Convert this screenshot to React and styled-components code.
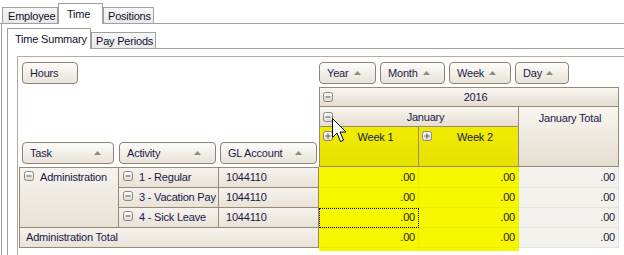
import React from 'react';
import styled, { createGlobalStyle } from 'styled-components';

const GlobalStyle = createGlobalStyle`
  html, body {
    margin: 0;
    padding: 0;
    background: #fff;
  }
  body {
    font-family: "Liberation Sans", Arial, sans-serif;
    font-size: 11px;
    letter-spacing: -0.2px;
    color: #000;
    overflow: hidden;
  }
`;

const LINE = '#9b8777';

const Page = styled.div`
  position: relative;
  width: 624px;
  height: 255px;
  overflow: hidden;
`;

const TabStrip = styled.div`
  display: flex;
  align-items: flex-end;
  height: ${p => p.$h}px;
  padding-left: ${p => p.$pad}px;
  border-bottom: 1px solid #a0a0a0;
`;

const Tab = styled.div`
  box-sizing: border-box;
  width: ${p => p.$w}px;
  height: ${p => p.$h}px;
  margin-bottom: ${p => (p.$active ? -1 : 0)}px;
  border: 1px solid #a0a0a0;
  border-bottom: none;
  background: ${p => (p.$active ? '#fff' : 'linear-gradient(#f7f7f7, #e9e9e9)')};
  display: flex;
  align-items: ${p => (p.$active ? 'flex-start' : 'center')};
  padding-top: ${p => (p.$active ? 4 : 0)}px;
  padding-left: ${p => p.$pl}px;
  color: #101030;
  white-space: nowrap;
`;

const TabBody = styled.div`
  margin-left: 1px;
  border-left: 1px solid #a0a0a0;
  padding: 4px 0 0 5px;
`;

const SubBody = styled.div`
  border-left: 1px solid #a0a0a0;
  padding: 7px 0 0 9px;
`;

const Pivot = styled.div`
  height: 200px;
  border-top: 1px solid #b9aa9c;
  border-left: 1px solid #b9aa9c;
  padding-left: 1px;
`;

const Grid = styled.div`
  display: grid;
  grid-template-columns: repeat(6, 100px);
  grid-template-rows: 30px 20px 20px 40px 21px 20px 20px 20px 3px;
`;

const FieldArea = styled.div`
  grid-column: ${p => p.$col};
  grid-row: ${p => p.$row};
  display: flex;
  align-items: ${p => (p.$bottom ? 'flex-end' : 'flex-start')};
  gap: ${p => p.$gap}px;
  padding: ${p => (p.$bottom ? '0 0 3px 3px' : `5px 0 0 ${p.$pl}px`)};
`;

const FieldButton = styled.div`
  box-sizing: border-box;
  width: ${p => p.$w}px;
  margin-right: ${p => p.$mr || 0}px;
  height: 22px;
  border: 1px solid #8f8276;
  border-radius: 4px;
  background: linear-gradient(#fdfcfa, #e9e3d8);
  display: flex;
  align-items: center;
  justify-content: space-between;
  padding: 0 ${p => p.$pr}px 0 7px;
  color: #1a1a48;
  white-space: nowrap;
`;

const HeadCell = styled.div`
  grid-column: ${p => p.$col};
  grid-row: ${p => p.$row};
  box-sizing: border-box;
  border-right: 1px solid ${LINE};
  border-bottom: 1px solid ${LINE};
  border-top: ${p => (p.$top ? `1px solid ${LINE}` : 'none')};
  border-left: ${p => (p.$left ? `1px solid ${LINE}` : 'none')};
  background: ${p =>
    p.$hl ? 'linear-gradient(#f0ec00, #e6e200)' : 'linear-gradient(#f8f6f1, #e5ded1)'};
  display: flex;
  align-items: ${p => (p.$tall ? 'flex-start' : 'center')};
  padding: ${p => (p.$tall ? '4px' : '0')} 0 0 3px;
  color: #181848;
  white-space: nowrap;
`;

const HeadText = styled.span`
  flex: 1;
  text-align: center;
  line-height: 12px;
  padding-top: ${p => (p.$tall ? 1 : 0)}px;
`;

const RowCell = styled.div`
  grid-column: ${p => p.$col};
  grid-row: ${p => p.$row};
  box-sizing: border-box;
  border-right: 1px solid ${LINE};
  border-bottom: 1px solid ${LINE};
  border-top: ${p => (p.$top ? `1px solid ${LINE}` : 'none')};
  border-left: ${p => (p.$left ? `1px solid ${LINE}` : 'none')};
  background: linear-gradient(#f6f3ee, #e8e2d7);
  display: flex;
  align-items: flex-start;
  gap: 6px;
  padding: 3px 0 0 ${p => p.$pl}px;
  line-height: 12px;
  color: #181848;
  white-space: nowrap;
  overflow: hidden;
`;

const DataCell = styled.div`
  grid-column: ${p => p.$col};
  grid-row: ${p => p.$row};
  box-sizing: border-box;
  background: ${p => (p.$total ? '#f4f2ee' : '#f7f700')};
  border-bottom: 1px solid ${p => (p.$total ? '#e6e2da' : '#ecec00')};
  border-right: 1px solid ${p => (p.$total ? '#e2ded6' : '#eeee00')};
  outline: ${p => (p.$focus ? '1px dotted #000' : 'none')};
  outline-offset: -1px;
  text-align: right;
  padding-right: 3px;
  line-height: ${p => (p.$first ? 21 : 19)}px;
  color: #201830;
`;

const Strip = styled.div`
  grid-column: ${p => p.$col};
  grid-row: 9;
  background: #f7f700;
`;

const Cursor = styled.svg`
  position: absolute;
  left: 332px;
  top: 118px;
`;

const SortArrow = () => (
  <svg width="7" height="4" viewBox="0 0 7 4">
    <polygon points="0,4 3.5,0 7,4" fill="#8d8a86" />
  </svg>
);

const ExpandBox = ({ plus }) => (
  <svg width="10" height="10" viewBox="0 0 10 10" style={{ flex: 'none' }}>
    <defs>
      <linearGradient id="eb" x1="0" y1="0" x2="0" y2="1">
        <stop offset="0" stopColor="#fdfdfc" />
        <stop offset="1" stopColor="#dcd8d0" />
      </linearGradient>
    </defs>
    <rect x="0.5" y="0.5" width="9" height="9" rx="2" fill="url(#eb)" stroke="#8a8680" />
    <rect x="2.5" y="4.5" width="5" height="1" fill="#5a5650" />
    {plus && <rect x="4.5" y="2.5" width="1" height="5" fill="#5a5650" />}
  </svg>
);

const rows = [
  { act: '1 - Regular', gl: '1044110' },
  { act: '3 - Vacation Pay', gl: '1044110' },
  { act: '4 - Sick Leave', gl: '1044110' },
];

export default function App() {
  return (
    <Page>
      <GlobalStyle />
      <TabStrip $h={23} $pad={2}>
        <Tab $w={56} $h={16} $pl={5}>Employee</Tab>
        <Tab $w={45} $h={21} $pl={8} $active>Time</Tab>
        <Tab $w={51} $h={16} $pl={4}>Positions</Tab>
      </TabStrip>
      <TabBody>
        <TabStrip $h={20} $pad={0}>
          <Tab $w={84} $h={21} $pl={7} $active>Time Summary</Tab>
          <Tab $w={65} $h={16} $pl={4}>Pay Periods</Tab>
        </TabStrip>
        <SubBody>
          <Pivot>
            <Grid>
              <FieldArea $col="1 / span 3" $row="1" $pl={3}>
                <FieldButton $w={56} $pr={7}>Hours</FieldButton>
              </FieldArea>
              <FieldArea $col="4 / span 3" $row="1" $pl={0} $gap={4}>
                <FieldButton $w={57} $pr={14}>Year <SortArrow /></FieldButton>
                <FieldButton $w={65} $pr={14}>Month <SortArrow /></FieldButton>
                <FieldButton $w={62} $pr={14}>Week <SortArrow /></FieldButton>
                <FieldButton $w={54} $pr={15}>Day <SortArrow /></FieldButton>
              </FieldArea>
              <FieldArea $col="1 / span 3" $row="2 / span 3" $bottom $gap={5}>
                <FieldButton $w={92} $pr={12}>Task <SortArrow /></FieldButton>
                <FieldButton $w={97} $pr={14} $mr={-1}>Activity <SortArrow /></FieldButton>
                <FieldButton $w={97} $pr={14}>GL Account <SortArrow /></FieldButton>
              </FieldArea>

              <HeadCell $col="4 / span 3" $row="2" $top $left>
                <ExpandBox />
                <HeadText>2016</HeadText>
              </HeadCell>
              <HeadCell $col="4 / span 2" $row="3" $left>
                <ExpandBox />
                <HeadText>January</HeadText>
              </HeadCell>
              <HeadCell $col="6" $row="3 / span 2" $tall>
                <HeadText $tall>January Total</HeadText>
              </HeadCell>
              <HeadCell $col="4" $row="4" $left $hl $tall>
                <ExpandBox plus />
                <HeadText>Week 1</HeadText>
              </HeadCell>
              <HeadCell $col="5" $row="4" $hl $tall>
                <ExpandBox plus />
                <HeadText>Week 2</HeadText>
              </HeadCell>

              <RowCell $col="1" $row="5 / span 3" $top $left $pl={4}>
                <ExpandBox />
                <span>Administration</span>
              </RowCell>
              {rows.map((r, i) => (
                <React.Fragment key={r.act}>
                  <RowCell $col="2" $row={5 + i} $top={i === 0} $pl={4}>
                    <ExpandBox />
                    <span>{r.act}</span>
                  </RowCell>
                  <RowCell $col="3" $row={5 + i} $top={i === 0} $pl={7}>
                    {r.gl}
                  </RowCell>
                  <DataCell $col="4" $row={5 + i} $first={i === 0} $focus={i === 2}>.00</DataCell>
                  <DataCell $col="5" $row={5 + i} $first={i === 0}>.00</DataCell>
                  <DataCell $col="6" $row={5 + i} $first={i === 0} $total>.00</DataCell>
                </React.Fragment>
              ))}
              <RowCell $col="1 / span 3" $row="8" $left $pl={6}>
                Administration Total
              </RowCell>
              <DataCell $col="4" $row="8">.00</DataCell>
              <DataCell $col="5" $row="8">.00</DataCell>
              <DataCell $col="6" $row="8" $total>.00</DataCell>
              <Strip $col="4" />
              <Strip $col="5" />
            </Grid>
          </Pivot>
        </SubBody>
      </TabBody>
      <Cursor width="16" height="25" viewBox="0 0 16 25">
        <path
          d="M0.5 0.5 L0.5 19.5 L5 15 L8.5 23.5 L11.5 22.2 L8 14 L14 14 Z"
          fill="#fff"
          stroke="#000"
          strokeWidth="1"
          strokeLinejoin="miter"
        />
      </Cursor>
    </Page>
  );
}
